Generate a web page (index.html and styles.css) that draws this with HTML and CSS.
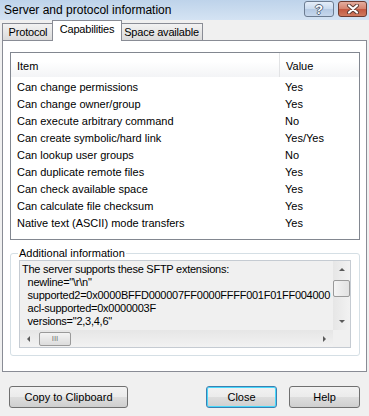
FILE: index.html
```html
<!DOCTYPE html>
<html lang="en">
<head>
<meta charset="UTF-8">
<title>Server and protocol information</title>
<link rel="stylesheet" href="styles.css">
</head>
<body>
<div class="titlebar">
    <div class="title">Server and protocol information</div>
    <div class="captionBtns">
        <div class="cbtn helpBtn">?</div>
        <div class="cbtn closeBtn">
            <svg width="16" height="10" viewBox="0 0 16 10">
                <path d="M4 1.5 L12 8.5 M12 1.5 L4 8.5" stroke="#5b3a32" stroke-width="4" stroke-linecap="round"/>
                <path d="M4 1.5 L12 8.5 M12 1.5 L4 8.5" stroke="#fff" stroke-width="2.2" stroke-linecap="round"/>
            </svg>
        </div>
    </div>
</div>

<div class="tabs">
    <div class="tab tabProtocol">Protocol</div>
    <div class="tab active">Capabilities</div>
    <div class="tab tabSpace">Space available</div>
</div>

<div class="panel">
    <div class="listview">
        <div class="lvHeader">
            <div class="lvCol">Item</div>
            <div class="lvCol">Value</div>
        </div>
        <div class="lvRows">
            <div class="lvRow"><div>Can change permissions</div><div>Yes</div></div>
            <div class="lvRow"><div>Can change owner/group</div><div>Yes</div></div>
            <div class="lvRow"><div>Can execute arbitrary command</div><div>No</div></div>
            <div class="lvRow"><div>Can create symbolic/hard link</div><div>Yes/Yes</div></div>
            <div class="lvRow"><div>Can lookup user groups</div><div>No</div></div>
            <div class="lvRow"><div>Can duplicate remote files</div><div>Yes</div></div>
            <div class="lvRow"><div>Can check available space</div><div>Yes</div></div>
            <div class="lvRow"><div>Can calculate file checksum</div><div>Yes</div></div>
            <div class="lvRow"><div>Native text (ASCII) mode transfers</div><div>Yes</div></div>
        </div>
    </div>

    <fieldset class="group">
        <legend>Additional information</legend>
        <div class="memo">
            <div class="memoText">The server supports these SFTP extensions:
  newline="\r\n"
  supported2=0x0000BFFD000007FF0000FFFF001F01FF004000
  acl-supported=0x0000003F
  versions="2,3,4,6"</div>
            <div class="vscroll">
                <div class="arrow up"></div>
                <div class="vtrack"><div class="thumb vthumb"></div></div>
                <div class="arrow down"></div>
            </div>
            <div class="hscroll">
                <div class="arrow left"></div>
                <div class="htrack"><div class="thumb hthumb">III</div></div>
                <div class="arrow right"></div>
            </div>
            <div class="corner"></div>
        </div>
    </fieldset>
</div>

<div class="footer">
    <div class="btn copyBtn">Copy to Clipboard</div>
    <div class="btn closeMain">Close</div>
    <div class="btn helpMain">Help</div>
</div>
</body>
</html>
```

FILE: styles.css
```css
body{
    margin: 0;
    width: 369px;
    height: 416px;
    overflow: hidden;
    background-color: #f0f0f0;
    font-family: "Liberation Sans", Arial, sans-serif;
    font-size: 11px;
    color: #000;
    display: flex;
    flex-direction: column;
}
.titlebar{
    height: 20px;
    flex: none;
    display: flex;
    background: linear-gradient(#bed3ea, #d4e3f3);
}
.title{
    font-size: 12px;
    padding: 3px 0 0 4px;
}
.captionBtns{
    margin-left: auto;
    display: flex;
    gap: 4px;
    padding: 1px 2px 0 0;
}
.cbtn{
    box-sizing: border-box;
    height: 16px;
    border: 1px solid #6c7c91;
    border-radius: 3px;
    display: flex;
    align-items: center;
    justify-content: center;
}
.helpBtn{
    width: 30px;
    background: linear-gradient(#e4edf8 0, #c9daee 50%, #b4c9e3 51%, #c6d7ec 100%);
    color: #fff;
    font-weight: bold;
    font-size: 13px;
    text-shadow: 1px 0 0 #55657a, -1px 0 0 #55657a, 0 1px 0 #55657a, 0 -1px 0 #55657a;
}
.closeBtn{
    width: 29px;
    border-color: #6b3a30;
    background: linear-gradient(#e3ad9f 0, #d5826d 50%, #c3573f 51%, #cf7a5f 100%);
}
.tabs{
    flex: none;
    height: 20px;
    display: flex;
    align-items: flex-end;
    padding-left: 2px;
    position: relative;
    z-index: 1;
}
.tab{
    box-sizing: border-box;
    height: 17px;
    padding-top: 2px;
    text-align: center;
    border: 1px solid #898c95;
    border-bottom: none;
    background: linear-gradient(#f2f2f2, #dbdbdb);
    letter-spacing: -0.2px;
}
.tabProtocol{
    width: 52px;
}
.tabSpace{
    width: 83px;
}
.tab.active{
    width: 70px;
    height: 21px;
    margin: 0 -2px -1px -2px;
    background: #fff;
    position: relative;
}
.panel{
    box-sizing: border-box;
    height: 332px;
    margin: 0 2px;
    border: 1px solid #898c95;
    background-color: #fff;
    padding: 11px 6px 0 7px;
}
.listview{
    box-sizing: border-box;
    width: 350px;
    height: 188px;
    border: 1px solid #828790;
}
.lvHeader{
    height: 24px;
    display: grid;
    grid-template-columns: 269px 1fr;
    background: linear-gradient(#fff 0, #fff 35%, #f3f4f6 100%);
}
.lvCol{
    padding: 7px 0 0 6px;
}
.lvCol:first-child{
    border-right: 1px solid #e2e3e5;
}
.lvRows{
    padding-top: 2px;
}
.lvRow{
    height: 17px;
    line-height: 17px;
    display: grid;
    grid-template-columns: 268px 1fr;
    padding-left: 6px;
}
.group{
    margin: 7px 0 0 0;
    width: 350px;
    height: 109px;
    box-sizing: border-box;
    border: 1px solid #d5dfe5;
    border-radius: 3px;
    padding: 1px 8px 4px 8px;
}
.group legend{
    padding: 0 1px;
    margin-left: -1px;
}
.memo{
    box-sizing: border-box;
    width: 332px;
    height: 88px;
    border: 1px solid #c5cbd2;
    background-color: #f0f0f0;
    display: grid;
    grid-template-columns: 1fr 17px;
    grid-template-rows: 1fr 17px;
}
.memoText{
    overflow: hidden;
    white-space: pre;
    line-height: 13px;
    padding: 2px 0 0 2px;
    letter-spacing: -0.25px;
}
.vscroll{
    display: flex;
    flex-direction: column;
    background: linear-gradient(90deg, #e6e6e6, #f2f2f2);
}
.hscroll{
    display: flex;
    background: linear-gradient(#e6e6e6, #f2f2f2);
}
.corner{
    background-color: #f0f0f0;
}
.arrow{
    width: 17px;
    height: 17px;
    flex: none;
    display: flex;
    align-items: center;
    justify-content: center;
}
.arrow::after{
    content: "";
    width: 0;
    height: 0;
    border: 3px solid transparent;
}
.arrow.up::after{ border-bottom: 3px solid #5a5a5a; border-top: none; }
.arrow.down::after{ border-top: 3px solid #5a5a5a; border-bottom: none; }
.arrow.left::after{ border-right: 3px solid #5a5a5a; border-left: none; }
.arrow.right::after{ border-left: 3px solid #5a5a5a; border-right: none; }
.vtrack, .htrack{
    flex: 1;
    display: flex;
}
.thumb{
    box-sizing: border-box;
    border: 1px solid #9a9a9a;
    border-radius: 2px;
    background: linear-gradient(90deg, #f4f4f4, #e2e2e2);
}
.vthumb{
    width: 17px;
    height: 17px;
    margin-top: 2px;
}
.hthumb{
    height: 14px;
    width: 32px;
    margin: 2px 0 0 2px;
    background: linear-gradient(#f4f4f4, #dcdcdc);
    font-size: 8px;
    line-height: 12px;
    text-align: center;
    color: #777;
}
.footer{
    display: flex;
    padding: 14px 0 0 9px;
}
.btn{
    box-sizing: border-box;
    height: 22px;
    border: 1px solid #707070;
    border-radius: 3px;
    background: linear-gradient(#f2f2f2 0, #ebebeb 50%, #dddddd 51%, #cfcfcf 100%);
    display: flex;
    align-items: center;
    justify-content: center;
}
.copyBtn{
    width: 119px;
}
.closeMain{
    width: 71px;
    margin-left: 78px;
    border-color: #3c7fb1;
    box-shadow: inset 0 0 0 1px #48d8fb;
}
.helpMain{
    width: 71px;
    margin-left: 12px;
}
```
